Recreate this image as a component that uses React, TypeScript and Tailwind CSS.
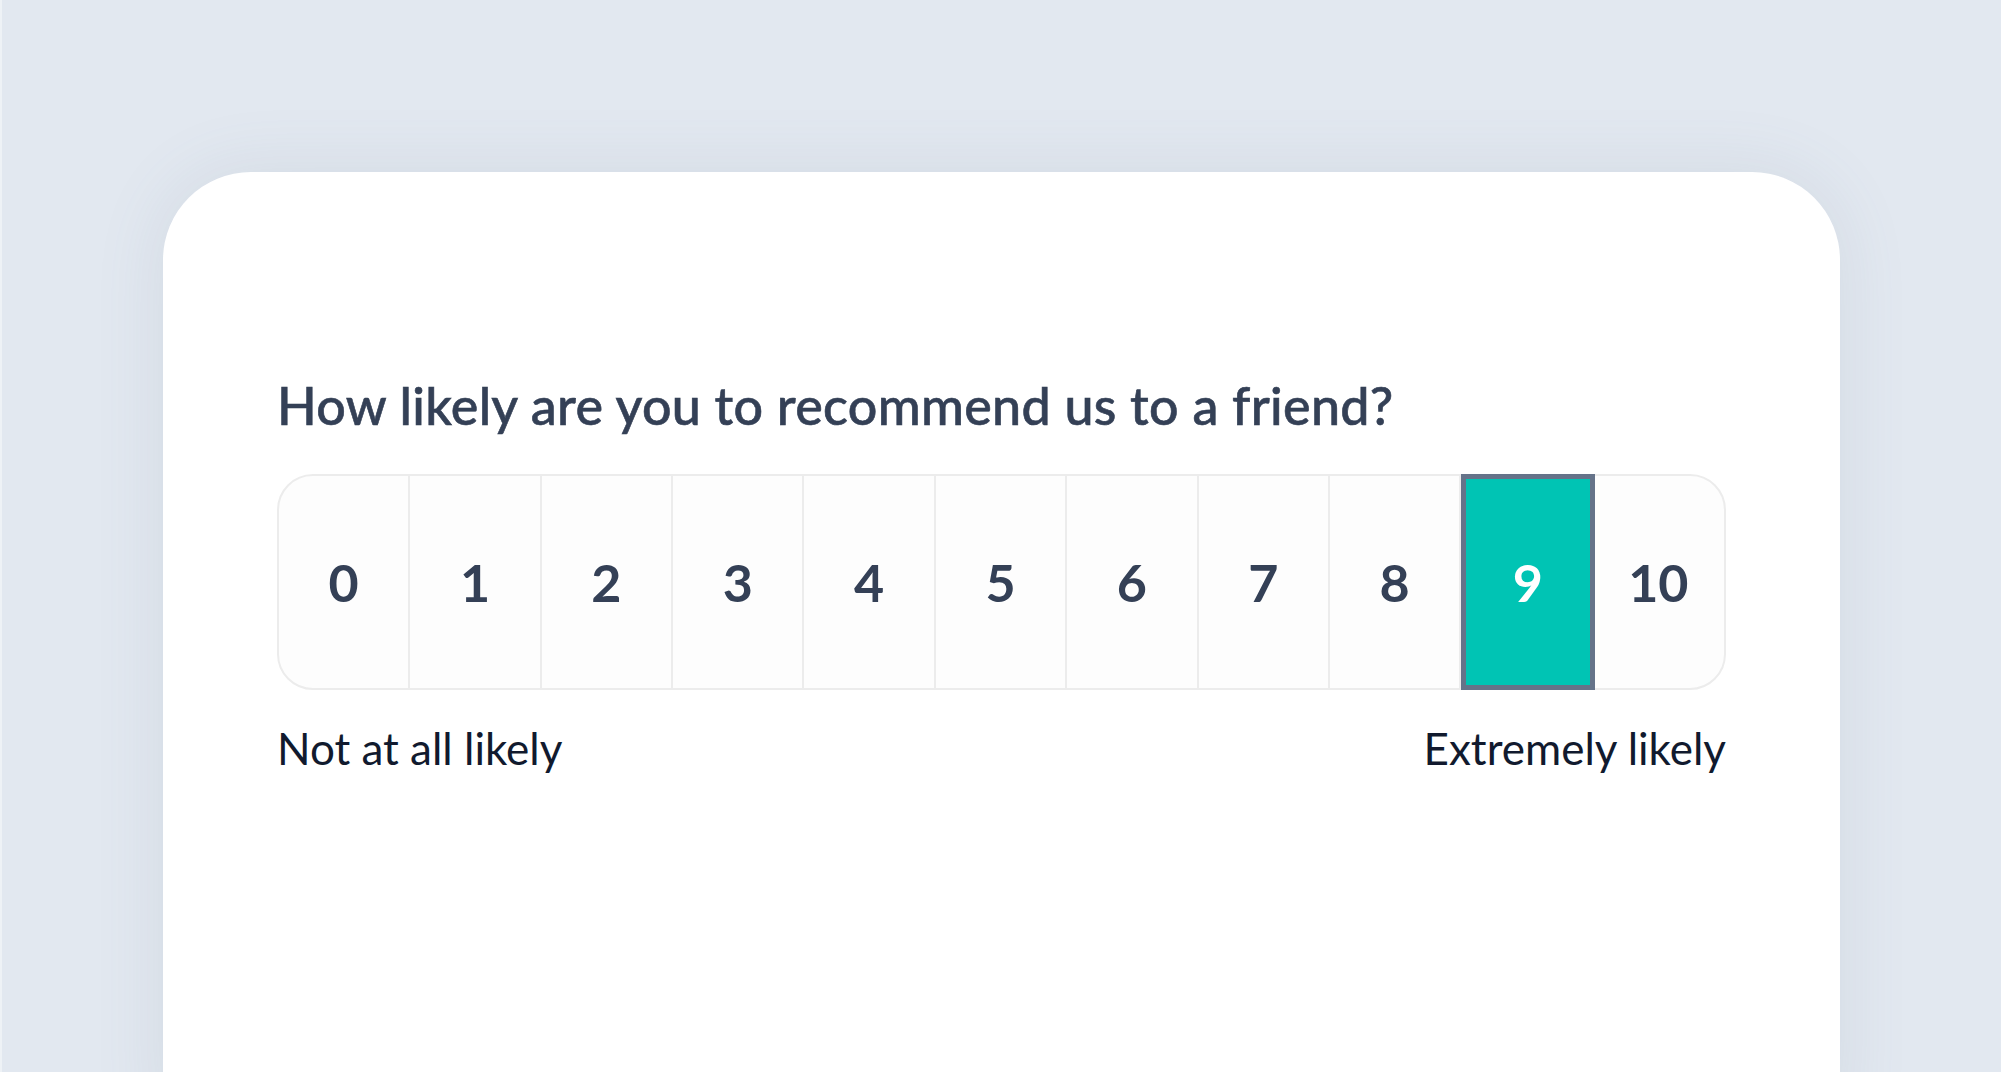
import { useState } from 'react';

const scores = [0, 1, 2, 3, 4, 5, 6, 7, 8, 9, 10];

export default function App() {
  const [selected, setSelected] = useState<number>(9);

  return (
    <div
      className="h-screen overflow-hidden bg-[#e2e8f0] border-l-2 border-[#eef2f6] pt-[172px] pl-[161px]"
      style={{ fontFamily: 'Lato, "Noto Sans", sans-serif' }}
    >
      <div className="w-[1677px] h-[950px] bg-white rounded-t-[88px] shadow-[0_0_70px_rgba(100,116,139,0.12)] px-[114px] pt-[203px]">
        <h2 className="text-[52px] leading-[60px] font-medium text-[#344056] tracking-[0.3px] [-webkit-text-stroke:0.6px_#344056]">
          How likely are you to recommend us to a friend?
        </h2>

        <div className="mt-[39px] grid grid-cols-11 h-[216px] rounded-[36px] border-2 border-[#ececec] bg-[#fdfdfd]">
          {scores.map((n) => {
            const isSelected = n === selected;
            return (
              <button
                key={n}
                type="button"
                onClick={() => setSelected(n)}
                className={
                  isSelected
                    ? 'relative z-10 -my-[2px] -mr-[2px] border-[5px] border-[#657389] bg-[#00c4b4] text-white text-[52px] font-bold flex items-center justify-center'
                    : n === 10
                    ? 'text-[52px] font-bold text-[#344056] flex items-center justify-center'
                    : 'border-r-2 border-[#ececec] text-[52px] font-bold text-[#344056] flex items-center justify-center'
                }
              >
                {n}
              </button>
            );
          })}
        </div>

        <div className="mt-[32px] flex justify-between text-[44px] leading-[52px] text-[#111a2e]">
          <span>Not at all likely</span>
          <span>Extremely likely</span>
        </div>
      </div>
    </div>
  );
}
